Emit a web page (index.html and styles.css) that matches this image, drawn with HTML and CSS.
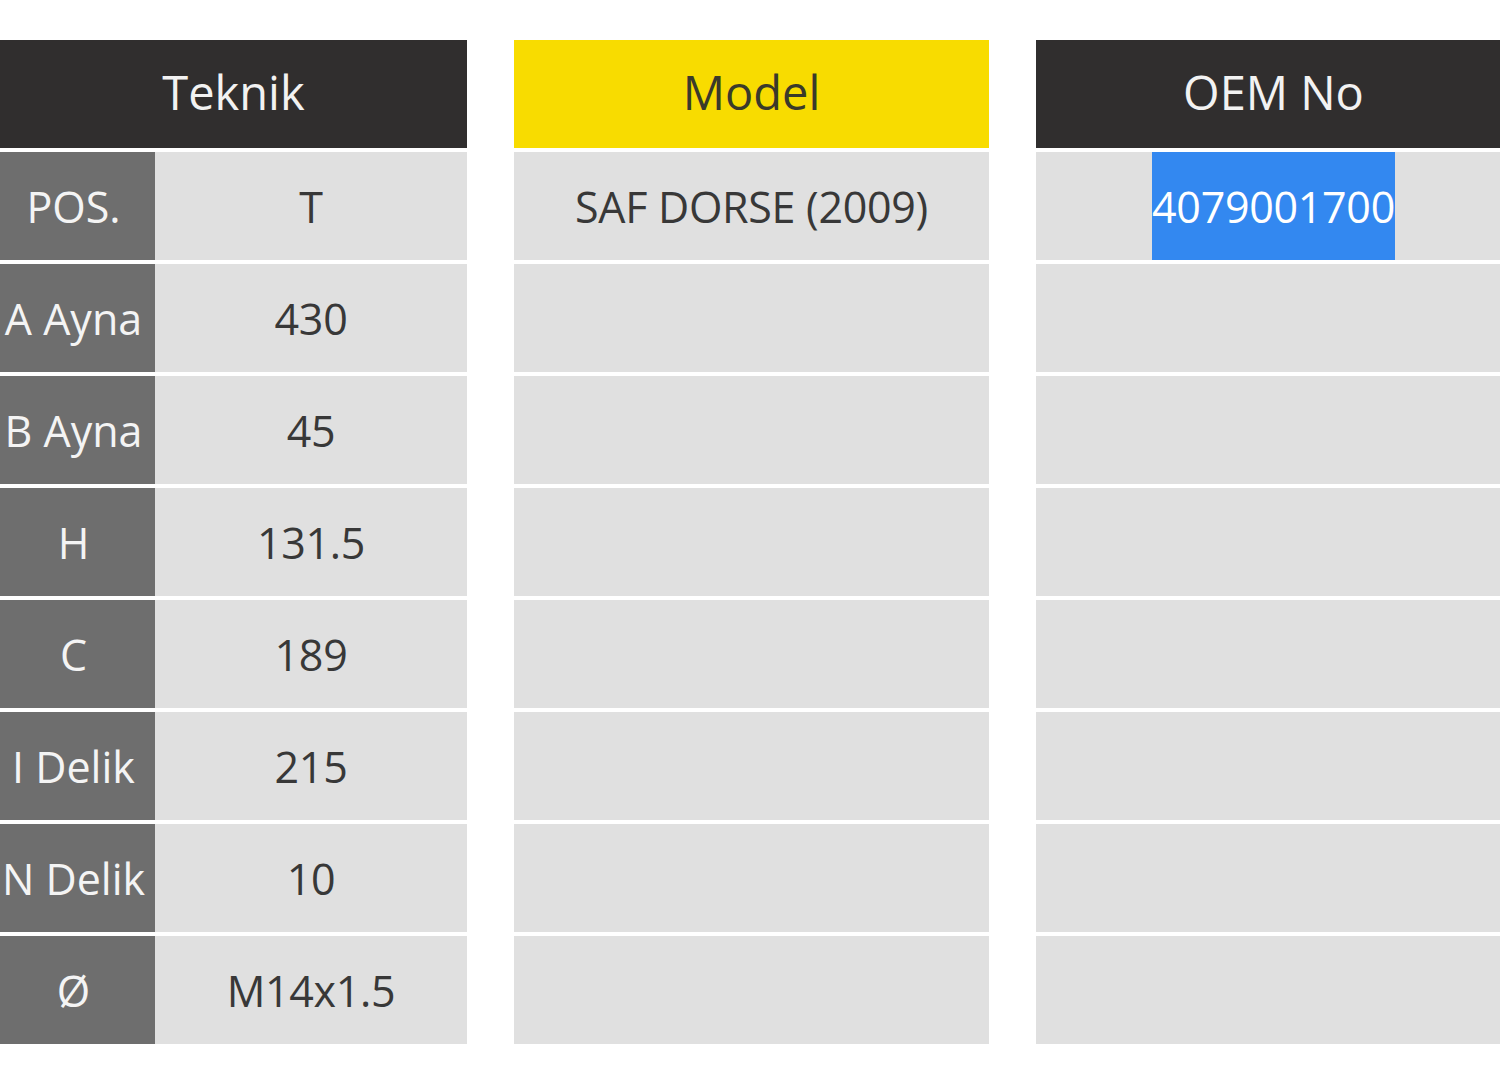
FILE: index.html
```html
<!DOCTYPE html>
<html lang="tr">
<head>
<meta charset="utf-8">
<title>Teknik</title>
<link rel="stylesheet" href="styles.css">
</head>
<body>
<div class="page">
  <div class="panel teknik">
    <div class="head dark">Teknik</div>
    <div class="row"><div class="lbl">POS.</div><div class="val">T</div></div>
    <div class="row"><div class="lbl">A Ayna</div><div class="val">430</div></div>
    <div class="row"><div class="lbl">B Ayna</div><div class="val">45</div></div>
    <div class="row"><div class="lbl">H</div><div class="val">131.5</div></div>
    <div class="row"><div class="lbl">C</div><div class="val">189</div></div>
    <div class="row"><div class="lbl">I Delik</div><div class="val">215</div></div>
    <div class="row"><div class="lbl">N Delik</div><div class="val">10</div></div>
    <div class="row"><div class="lbl">Ø</div><div class="val">M14x1.5</div></div>
  </div>
  <div class="panel model">
    <div class="head yellow">Model</div>
    <div class="row"><div class="val">SAF DORSE (2009)</div></div>
    <div class="row"><div class="val"></div></div>
    <div class="row"><div class="val"></div></div>
    <div class="row"><div class="val"></div></div>
    <div class="row"><div class="val"></div></div>
    <div class="row"><div class="val"></div></div>
    <div class="row"><div class="val"></div></div>
    <div class="row"><div class="val"></div></div>
  </div>
  <div class="panel oem">
    <div class="head dark">OEM No</div>
    <div class="row"><div class="val"><span class="sel">4079001700</span></div></div>
    <div class="row"><div class="val"></div></div>
    <div class="row"><div class="val"></div></div>
    <div class="row"><div class="val"></div></div>
    <div class="row"><div class="val"></div></div>
    <div class="row"><div class="val"></div></div>
    <div class="row"><div class="val"></div></div>
    <div class="row"><div class="val"></div></div>
  </div>
</div>
</body>
</html>
```

FILE: styles.css
```css
html, body {
  margin: 0;
  padding: 0;
  background: #ffffff;
  overflow: hidden;
}
body {
  font-family: "Open Sans", "Noto Sans", sans-serif;
  font-size: 43px;
}
.page {
  display: flex;
  gap: 47px;
  padding-top: 40px;
  width: 1560px;
}
.panel {
  display: flex;
  flex-direction: column;
  gap: 4px;
  flex: none;
}
.teknik { width: 467px; }
.model { width: 475px; }
.oem { width: 475px; }
.head {
  height: 108px;
  display: flex;
  align-items: center;
  justify-content: center;
  font-size: 47px;
  padding-bottom: 4px;
  box-sizing: border-box;
}
.dark { background: #302e2e; color: #f2f2f2; }
.yellow { background: #f8dc00; color: #3a3a2a; }
.row {
  display: flex;
  height: 108px;
}
.lbl {
  width: 155px;
  flex: none;
  box-sizing: border-box;
  padding-right: 8px;
  background: #6e6e6e;
  color: #f4f4f4;
  display: flex;
  align-items: center;
  justify-content: center;
  white-space: nowrap;
}
.val {
  flex: 1;
  background: #e0e0e0;
  color: #383838;
  display: flex;
  align-items: center;
  justify-content: center;
  white-space: nowrap;
  letter-spacing: -0.3px;
}
.sel {
  background: #3388f0;
  color: #ffffff;
  height: 108px;
  display: flex;
  align-items: center;
}
```
